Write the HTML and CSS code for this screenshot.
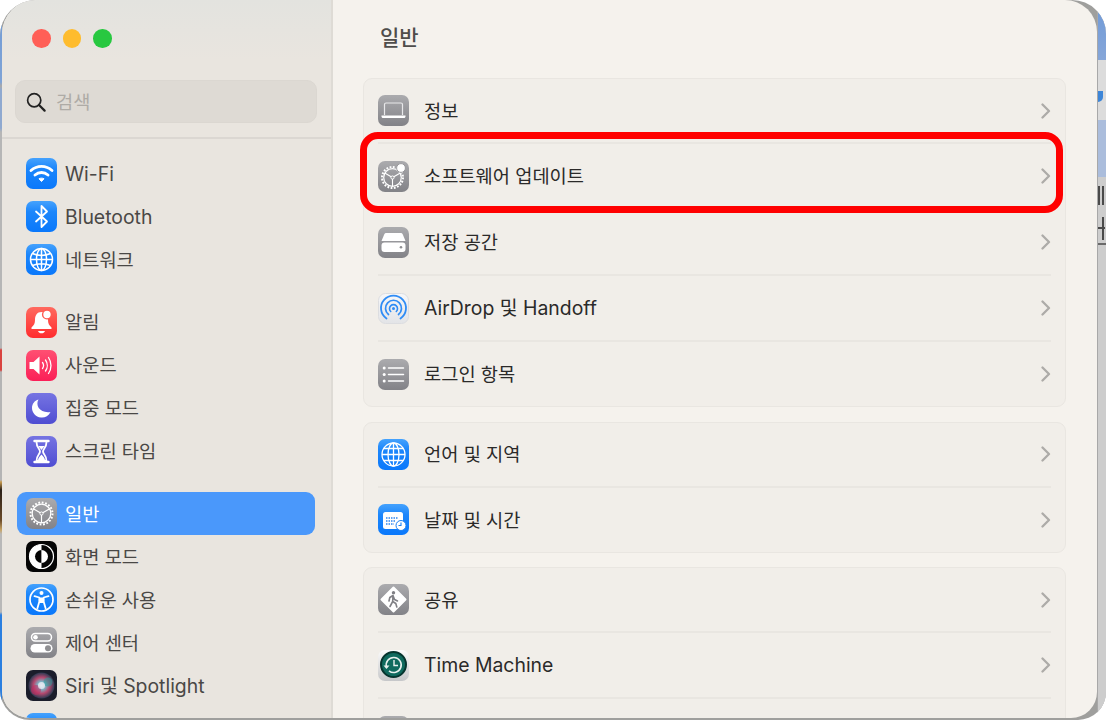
FILE: index.html
```html
<!DOCTYPE html>
<html lang="ko">
<head>
<meta charset="utf-8">
<title>시스템 설정 - 일반</title>
<link rel="stylesheet" href="styles.css">
</head>
<body>
<svg class="defs" width="0" height="0" aria-hidden="true">
  <defs>
    <linearGradient id="gBlue" x1="0" y1="0" x2="0" y2="1"><stop offset="0" stop-color="#45a2fd"/><stop offset=".35" stop-color="#1c86fb"/><stop offset="1" stop-color="#0a78fb"/></linearGradient>
    <linearGradient id="gRed" x1="0" y1="0" x2="0" y2="1"><stop offset="0" stop-color="#ff6a5f"/><stop offset="1" stop-color="#ff2c2e"/></linearGradient>
    <linearGradient id="gPink" x1="0" y1="0" x2="0" y2="1"><stop offset="0" stop-color="#ff4f72"/><stop offset="1" stop-color="#fb1f57"/></linearGradient>
    <linearGradient id="gIndigo" x1="0" y1="0" x2="0" y2="1"><stop offset="0" stop-color="#7674e2"/><stop offset="1" stop-color="#4f4dd2"/></linearGradient>
    <linearGradient id="gGray" x1="0" y1="0" x2="0" y2="1"><stop offset="0" stop-color="#ababae"/><stop offset="1" stop-color="#828287"/></linearGradient>
    <linearGradient id="gSilver" x1="0" y1="0" x2="0" y2="1"><stop offset="0" stop-color="#fbfbfb"/><stop offset="1" stop-color="#c6c7c9"/></linearGradient>
    <linearGradient id="gAir" x1="0" y1="0" x2="0" y2="1"><stop offset="0" stop-color="#f6f7f9"/><stop offset="1" stop-color="#e3e4e7"/></linearGradient>
    <radialGradient id="gSiri" cx="50%" cy="50%" r="50%"><stop offset="0" stop-color="#dfe4ea"/><stop offset=".3" stop-color="#7fb3c4"/><stop offset=".62" stop-color="#b5496f"/><stop offset="1" stop-color="#2c3a52"/></radialGradient>
  </defs>
</svg>
<div class="desk">
  <div class="edge-left"></div>
  <div class="window">
    <aside class="sidebar">
      <div class="lights"><span class="light red"></span><span class="light yellow"></span><span class="light green"></span></div>
      <div class="search">
        <svg class="search-ico" viewBox="0 0 20 20"><circle cx="8.200" cy="8.200" r="6.600" fill="none" stroke="#222" stroke-width="1.700"/><path d="M13 13l5.600 5.600" stroke="#222" stroke-width="2.200" stroke-linecap="round"/></svg>
        <span class="search-text">검색</span>
      </div>
      <nav class="nav">
        <div class="group">
          <div class="item"><svg class="ico" viewBox="0 0 31 31"><rect fill="url(#gBlue)" width="31" height="31" rx="7"/><path d="M5 12.500c6-5.500 15-5.500 21 0M9 17c3.800-3.300 9.200-3.300 13 0" fill="none" stroke="#fff" stroke-width="2.900" stroke-linecap="round"/><path d="M13 20.800c1.500-.9 3.500-.9 5 0l-2.500 2.700z" fill="#fff" stroke="#fff" stroke-linejoin="round"/></svg><span>Wi-Fi</span></div>
          <div class="item"><svg class="ico" viewBox="0 0 31 31"><rect fill="url(#gBlue)" width="31" height="31" rx="7"/><path d="M10 10.500l11 10-5.500 5.500V5l5.500 5.500-11 10" fill="none" stroke="#fff" stroke-width="1.800" stroke-linejoin="round" stroke-linecap="round"/></svg><span>Bluetooth</span></div>
          <div class="item"><svg class="ico" viewBox="0 0 31 31"><rect fill="url(#gBlue)" width="31" height="31" rx="7"/><g fill="none" stroke="#fff" stroke-width="1.500"><circle cx="15.500" cy="15.500" r="11"/><ellipse cx="15.500" cy="15.500" rx="5" ry="11"/><path d="M15.500 4.500v22M4.500 15.500h22M6.500 9.500c5 2.500 13 2.500 18 0M6.500 21.500c5-2.500 13-2.500 18 0"/></g></svg><span class="ko">네트워크</span></div>
        </div>
        <div class="group">
          <div class="item"><svg class="ico" viewBox="0 0 31 31"><rect fill="url(#gRed)" width="31" height="31" rx="7"/><path d="M15.500 5c-4.500 0-6.500 3.500-6.500 8 0 3.500-1 5-3.500 7.500v1.500h20v-1.500c-2.500-2.500-3.500-4-3.500-7.500 0-4.500-2-8-6.500-8z" fill="#fff"/><path d="M12 24h7c-.5 1.600-2 2.300-3.500 2.300S12.500 25.600 12 24z" fill="#fff"/><circle cx="21" cy="7.500" r="4.400" fill="#fff" stroke="#ff5a50" stroke-width="1.400"/></svg><span class="ko">알림</span></div>
          <div class="item"><svg class="ico" viewBox="0 0 31 31"><rect fill="url(#gPink)" width="31" height="31" rx="7"/><path d="M3.500 12h4l6-5.500v18l-6-5.500h-4z" fill="#fff"/><path d="M16.500 12.500c1.300 1.800 1.300 4.200 0 6M19.500 10c2.300 3.200 2.300 7.800 0 11M22.500 7.500c3.300 4.800 3.300 11.200 0 16" fill="none" stroke="#fff" stroke-width="1.300" stroke-linecap="round"/></svg><span class="ko">사운드</span></div>
          <div class="item"><svg class="ico" viewBox="0 0 31 31"><rect fill="url(#gIndigo)" width="31" height="31" rx="7"/><path d="M12.500 6.500c-3.500 6 1.500 14 12 12.500-2 4-6 6-9.500 5.500C9.500 24 6 19.500 6 15c0-4 2.500-7.500 6.500-8.500z" fill="#fff"/></svg><span class="ko">집중 모드</span></div>
          <div class="item"><svg class="ico" viewBox="0 0 31 31"><rect fill="url(#gIndigo)" width="31" height="31" rx="7"/><path d="M8.500 5h14M8.500 26h14" stroke="#fff" stroke-width="2.400" stroke-linecap="round"/><path d="M10.500 6c0 6 3.500 6.500 3.500 9.500S10.500 19 10.500 25h10c0-6-3.500-6.500-3.500-9.500S20.500 12 20.500 6" fill="none" stroke="#fff" stroke-width="1.800"/><path d="M12 24c.5-3 2.500-4 3.500-5.500 1 1.500 3 2.500 3.500 5.500zM12.500 10h6c-.5 1.500-2.300 2.700-3 4-.7-1.300-2.500-2.500-3-4z" fill="#fff"/></svg><span class="ko">스크린 타임</span></div>
        </div>
        <div class="group">
          <div class="item selected"><svg class="ico" viewBox="0 0 31 31"><rect fill="url(#gGray)" width="31" height="31" rx="7"/><circle cx="15.500" cy="15.500" r="11" fill="none" stroke="#fff" stroke-width="2" stroke-dasharray="1.800 1.650"/><circle cx="15.500" cy="15.500" r="9.300" fill="none" stroke="#fff" stroke-width="1.300"/><path d="M15.500 15.500V25M15.500 15.500L7.300 10.700M15.500 15.500l8.200-4.800" stroke="#fff" stroke-width="1.200"/><circle cx="15.500" cy="15.500" r="1.600" fill="#99999c" stroke="#fff"/></svg><span class="ko">일반</span></div>
          <div class="item"><svg class="ico" viewBox="0 0 31 31"><rect fill="#050505" width="31" height="31" rx="7"/><circle cx="15.500" cy="15.500" r="12" fill="#050505" stroke="#fff" stroke-width="1.200"/><path d="M15.500 3.500a12 12 0 0 0 0 24z" fill="#fff"/><path d="M15.500 9a6.500 6.500 0 0 0 0 13z" fill="#050505"/><path d="M15.500 9a6.500 6.500 0 0 1 0 13z" fill="#fff"/></svg><span class="ko">화면 모드</span></div>
          <div class="item"><svg class="ico" viewBox="0 0 31 31"><rect fill="url(#gBlue)" width="31" height="31" rx="7"/><circle cx="15.500" cy="15.500" r="11.500" fill="none" stroke="#fff" stroke-width="1.700"/><circle cx="15.500" cy="9" r="2" fill="#fff"/><path d="M8.500 12.200l4.800 1.300v4.300l-1.900 6.500M22.500 12.200l-4.800 1.300v4.300l1.900 6.500" fill="none" stroke="#fff" stroke-width="1.800" stroke-linecap="round" stroke-linejoin="round"/><path d="M13.300 13.500h4.400v5.500h-4.400z" fill="#fff"/></svg><span class="ko">손쉬운 사용</span></div>
          <div class="item"><svg class="ico" viewBox="0 0 31 31"><rect fill="url(#gGray)" width="31" height="31" rx="7"/><rect x="5.500" y="6.500" width="20" height="7.500" rx="3.750" fill="none" stroke="#fff" stroke-width="1.500"/><circle cx="9.500" cy="10.250" r="2.300" fill="#fff"/><rect x="4.500" y="17" width="22" height="8.500" rx="4.250" fill="#fff"/><circle cx="22" cy="21.250" r="3" fill="#8f8f92"/></svg><span class="ko">제어 센터</span></div>
          <div class="item"><svg class="ico" viewBox="0 0 31 31"><rect fill="#1b1d2b" width="31" height="31" rx="7"/><circle cx="15.500" cy="15.500" r="13" fill="url(#gSiri)"/><circle cx="10" cy="20" r="5" fill="#c22b63" opacity=".55"/><circle cx="22" cy="12" r="4.500" fill="#27a3a0" opacity=".55"/><circle cx="15.500" cy="15.500" r="3.500" fill="#e6ebf2" opacity=".8"/></svg><span class="mix">Siri 및 Spotlight</span></div>
          <div class="item"><svg class="ico" viewBox="0 0 31 31"><rect fill="url(#gBlue)" width="31" height="31" rx="7"/></svg></div>
        </div>
      </nav>
    </aside>
    <main class="main">
      <h1 class="title">일반</h1>
      <section class="card">
        <div class="row"><svg class="ico" viewBox="0 0 31 31"><rect fill="url(#gGray)" width="31" height="31" rx="7"/><path d="M6.500 20V9.500a1.500 1.500 0 0 1 1.500-1.500h15a1.500 1.500 0 0 1 1.500 1.500V20" fill="none" stroke="#e8e8ea" stroke-width="1.200"/><path d="M3.500 20.500h24v1c0 .8-.7 1.500-1.500 1.500H5c-.8 0-1.500-.7-1.500-1.500z" fill="#fff"/></svg><span class="label ko">정보</span><svg class="chev" viewBox="0 0 10 16"><path d="M1.500 1.500L8 8l-6.500 6.500"/></svg></div>
        <div class="row"><svg class="ico" viewBox="0 0 31 31"><rect fill="url(#gGray)" width="31" height="31" rx="7"/><circle cx="14.500" cy="16.500" r="10.500" fill="none" stroke="#fff" stroke-width="2" stroke-dasharray="1.800 1.500"/><circle cx="14.500" cy="16.500" r="8.800" fill="none" stroke="#fff" stroke-width="1.200"/><path d="M14.500 16.500V25.500M14.500 16.500l-7.800-4.500M14.500 16.500l7.800-4.500" stroke="#fff" stroke-width="1.100"/><circle cx="14.500" cy="16.500" r="1.600" fill="#99999c" stroke="#fff"/><circle cx="23" cy="7" r="4.400" fill="#fff" stroke="#9a9a9d"/></svg><span class="label ko">소프트웨어 업데이트</span><svg class="chev" viewBox="0 0 10 16"><path d="M1.500 1.500L8 8l-6.500 6.500"/></svg></div>
        <div class="row"><svg class="ico" viewBox="0 0 31 31"><rect fill="url(#gGray)" width="31" height="31" rx="7"/><path d="M8.500 6h14c1 0 1.800.5 2.300 1.400L27.500 14h-24l2.700-6.600C6.700 6.500 7.500 6 8.500 6z" fill="#fff"/><rect x="3.500" y="15.500" width="24" height="9.500" rx="3" fill="#fff"/><circle cx="23" cy="20.300" r="1.300" fill="#8f8f92"/></svg><span class="label ko">저장 공간</span><svg class="chev" viewBox="0 0 10 16"><path d="M1.500 1.500L8 8l-6.500 6.500"/></svg></div>
        <div class="row"><svg class="ico" viewBox="0 0 31 31"><rect fill="url(#gAir)" stroke="#dcdde0" x=".5" y=".5" width="30" height="30" rx="7"/><g fill="none" stroke="#2f8cf5" stroke-linecap="round"><path d="M8.500 25.500a12.500 12.500 0 1 1 14 0" stroke-width="1.800"/><path d="M10.500 21.500a8 8 0 1 1 10 0" stroke-width="1.700"/><path d="M12.700 18.500a4 4 0 1 1 5.600 0" stroke-width="1.600"/></g><circle cx="15.500" cy="15.500" r="1.500" fill="#2f8cf5"/></svg><span class="label mix">AirDrop 및 Handoff</span><svg class="chev" viewBox="0 0 10 16"><path d="M1.500 1.500L8 8l-6.500 6.500"/></svg></div>
        <div class="row"><svg class="ico" viewBox="0 0 31 31"><rect fill="url(#gGray)" width="31" height="31" rx="7"/><path d="M10.500 9h15M10.500 15.500h15M10.500 22h15" stroke="#fff" stroke-width="1.500" stroke-linecap="round"/><circle cx="6.200" cy="9" r="1.500" fill="#fff"/><circle cx="6.200" cy="15.500" r="1.500" fill="#fff"/><circle cx="6.200" cy="22" r="1.500" fill="#fff"/></svg><span class="label ko">로그인 항목</span><svg class="chev" viewBox="0 0 10 16"><path d="M1.500 1.500L8 8l-6.500 6.500"/></svg></div>
      </section>
      <section class="card">
        <div class="row"><svg class="ico" viewBox="0 0 31 31"><rect fill="url(#gBlue)" width="31" height="31" rx="7"/><g fill="none" stroke="#fff" stroke-width="1.300"><circle cx="15.500" cy="15.500" r="11.500"/><ellipse cx="15.500" cy="15.500" rx="5.500" ry="11.500"/><path d="M15.500 4v23M4 15.500h23M5.800 9.500h19.400M5.800 21.500h19.400"/></g></svg><span class="label ko">언어 및 지역</span><svg class="chev" viewBox="0 0 10 16"><path d="M1.500 1.500L8 8l-6.500 6.500"/></svg></div>
        <div class="row"><svg class="ico" viewBox="0 0 31 31"><rect fill="url(#gBlue)" width="31" height="31" rx="7"/><rect x="5" y="8" width="20" height="17" rx="2.500" fill="#fff"/><path d="M8 14h12M8 17h10M8 20h8" stroke="#2f86f0" stroke-width="1.500" stroke-dasharray="1.500 1"/><circle cx="23" cy="21.500" r="5" fill="#fff" stroke="#1a80f5"/><path d="M23 18.500v3h-2.500" fill="none" stroke="#1a80f5" stroke-width="1.100"/></svg><span class="label ko">날짜 및 시간</span><svg class="chev" viewBox="0 0 10 16"><path d="M1.500 1.500L8 8l-6.500 6.500"/></svg></div>
      </section>
      <section class="card">
        <div class="row"><svg class="ico" viewBox="0 0 31 31"><rect fill="url(#gGray)" width="31" height="31" rx="7"/><path d="M15.500 3.500l12 12-12 12-12-12z" fill="#fff" stroke="#fff" stroke-linejoin="round" stroke-width="2"/><circle cx="15.500" cy="8.800" r="1.700" fill="#808085"/><path d="M15 11.500l-3.200 2-.8 3.500M15 11.500l1.500 4 3 1.500M15 11.500l-.3 6-2.700 5M14.700 17.500l3.100 2 1 3.500" fill="none" stroke="#808085" stroke-width="1.600" stroke-linecap="round" stroke-linejoin="round"/></svg><span class="label ko">공유</span><svg class="chev" viewBox="0 0 10 16"><path d="M1.500 1.500L8 8l-6.500 6.500"/></svg></div>
        <div class="row"><svg class="ico" viewBox="0 0 31 31"><rect fill="url(#gSilver)" width="31" height="31" rx="7"/><circle cx="15.500" cy="14.500" r="12.500" fill="#0f6a5e"/><circle cx="15.500" cy="14.500" r="12.500" fill="none" stroke="#06352f" stroke-width="2"/><path d="M8.500 17a7.500 7.500 0 1 1 2.500 3.800" fill="none" stroke="#e8f0ee" stroke-width="1.600"/><path d="M5.500 15.500h6l-3 3.500z" fill="#e8f0ee"/><path d="M16 10v5.500h4" fill="none" stroke="#e8f0ee" stroke-width="1.400"/></svg><span class="label">Time Machine</span><svg class="chev" viewBox="0 0 10 16"><path d="M1.500 1.500L8 8l-6.500 6.500"/></svg></div>
        <div class="row"><svg class="ico" viewBox="0 0 31 31"><rect fill="url(#gGray)" width="31" height="31" rx="7"/></svg></div>
      </section>
      <div class="highlight"></div>
    </main>
  </div>
  <div class="edge-right">
    <div class="seg seg-blue"></div>
    <div class="seg seg-page"><span class="seg-mark"></span></div>
    <div class="seg seg-sky"></div>
    <div class="seg seg-rest"><span class="seg-bars"></span><span class="seg-glyph"></span><span class="seg-under"></span></div>
  </div>
</div>
</body>
</html>
```

FILE: styles.css
```css
* { box-sizing: border-box; }
html, body { margin: 0; padding: 0; width: 1106px; height: 720px; overflow: hidden; background: #fff; }
body { font-family: "Inter", "Noto Sans CJK KR", sans-serif; }
.defs { position: absolute; }
.desk { display: flex; width: 1106px; height: 720px; border-radius: 36px 34px 28px 30px; overflow: hidden; background: #9f9f9d; }
.edge-left { width: 2px; flex: none; background: linear-gradient(#6f9bd6 0, #7fa3d6 82px, #a9a9a9 86px, #8fa9d0 90px, #8fa9d0 128px, #b6b6b6 132px, #b6b6b6 348px, #d9433f 350px, #d9433f 370px, #b4b4b4 372px, #b4b4b4 480px, #c89b4e 482px, #2a2018 490px, #6a4a28 520px, #c8a566 530px, #b8b8b8 534px, #b8b8b8 612px, #2b7fe0 615px, #2b7fe0 720px); }
.edge-right { display: flex; flex-direction: column; width: 9px; flex: none; border-left: 1px solid #a8a8a8; background: #cfcfcf; }
.seg { flex: none; }
.seg-blue { height: 60px; background: linear-gradient(#6e99d8, #86a6d8); }
.seg-page { height: 60px; padding-top: 31px; background: #dcdcdc; }
.seg-mark { display: block; width: 5px; height: 11px; border-radius: 0 0 5px 0; background: #3d86d8; }
.seg-sky { height: 57px; background: #abbddc; }
.seg-rest { height: 543px; padding-top: 9px; background: #cdcdcd; }
.seg-bars { display: block; width: 6px; height: 19px; background: linear-gradient(90deg, #4a4a4a 0 2px, #cdcdcd 2px 4px, #4a4a4a 4px 6px); }
.seg-glyph { display: block; width: 7px; height: 23px; margin-top: 12px; background: linear-gradient(90deg, transparent 0 4px, #4a4a4a 4px 6px, transparent 6px), linear-gradient(transparent 0 10px, #4a4a4a 10px 12px, transparent 12px); }
.seg-under { display: block; height: 2px; margin-top: 3px; background: #6a6a6a; }
.window { flex: none; width: 1095px; height: 718px; display: flex; overflow: hidden; border-radius: 34px 32px 26px 28px; background: #f5f2ed; }
.sidebar { flex: none; width: 331px; height: 718px; overflow: hidden; padding: 0 14px 0 13px; border-right: 2px solid #dedbd5; background: linear-gradient(#e3e3df 0, #e9e5df 60px); }
.lights { display: flex; gap: 12px; height: 80px; padding: 29px 0 0 17px; }
.light { width: 18.500px; height: 18.500px; border-radius: 50%; }
.red { background: #ff5f57; }
.yellow { background: #febc2e; }
.green { background: #28c840; }
.search { display: flex; align-items: center; gap: 10px; height: 43px; margin: 0 0 14px 0; padding-left: 10px; background: #dedad4; border: 1px solid #dbd7d1; border-radius: 10px; color: #aeaba6; font-size: 18.700px; }
.search-ico { flex: none; width: 20px; height: 20px; }
.search-text { margin-bottom: 2px; }
.nav { margin: 0 -14px 0 -13px; border-top: 2px solid #dbd7d2; padding: 13px 16px 0 15px; }
.group { margin-bottom: 19.500px; }
.item { display: flex; align-items: center; gap: 8px; height: 43px; padding-left: 9px; border-radius: 9px; color: #4a4846; font-size: 19.400px; white-space: nowrap; }
.selected { background: #4a98fb; color: #fff; }
.ko { font-size: 18.700px; margin-bottom: 3px; }
.mix { margin-bottom: 3px; }
.ico { flex: none; width: 31px; height: 31px; }
.main { position: relative; flex: 1; min-width: 0; height: 718px; overflow: hidden; padding: 0 31px 0 30px; }
.title { margin: 0; height: 78px; padding: 22px 0 0 17px; font-size: 21px; line-height: 32px; font-weight: 500; color: #4f4d4b; }
.card { margin-bottom: 14.500px; background: #f1eee9; border: 1px solid #e9e6e1; border-radius: 9px; padding: 0 14px; }
.row { display: flex; align-items: center; height: 66px; border-bottom: 2px solid #e9e6e1; }
.row:first-child { height: 65px; }
.row:last-child { height: 64px; border-bottom: 0; }
.label { flex: 1; margin-left: 15px; color: #2b2a29; font-size: 19.400px; white-space: nowrap; }
.label.ko { font-size: 18.700px; }
.chev { flex: none; width: 10px; height: 16px; margin-left: auto; fill: none; stroke: #adaba8; stroke-width: 2.300; stroke-linecap: round; stroke-linejoin: round; }
.highlight { position: absolute; left: 27px; top: 132px; width: 703px; height: 81px; border: 7px solid #f00; border-radius: 18px; }
```
